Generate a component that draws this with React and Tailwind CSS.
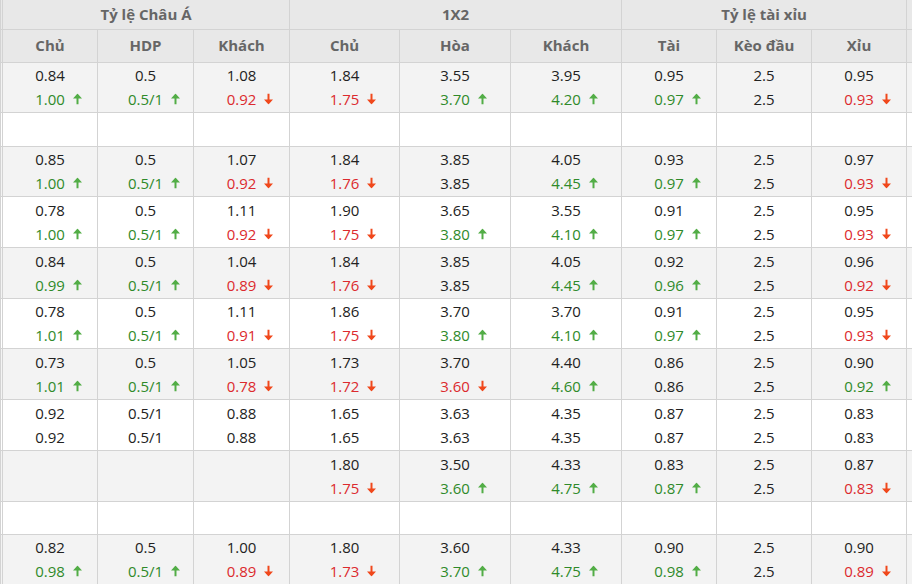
import React from "react";

const UP = "up";
const DOWN = "down";

// [top, bottom, direction] for each of the 9 columns; null = empty cell
const rows = [
  [
    ["0.84", "1.00", UP], ["0.5", "0.5/1", UP], ["1.08", "0.92", DOWN],
    ["1.84", "1.75", DOWN], ["3.55", "3.70", UP], ["3.95", "4.20", UP],
    ["0.95", "0.97", UP], ["2.5", "2.5"], ["0.95", "0.93", DOWN],
  ],
  "empty",
  [
    ["0.85", "1.00", UP], ["0.5", "0.5/1", UP], ["1.07", "0.92", DOWN],
    ["1.84", "1.76", DOWN], ["3.85", "3.85"], ["4.05", "4.45", UP],
    ["0.93", "0.97", UP], ["2.5", "2.5"], ["0.97", "0.93", DOWN],
  ],
  [
    ["0.78", "1.00", UP], ["0.5", "0.5/1", UP], ["1.11", "0.92", DOWN],
    ["1.90", "1.75", DOWN], ["3.65", "3.80", UP], ["3.55", "4.10", UP],
    ["0.91", "0.97", UP], ["2.5", "2.5"], ["0.95", "0.93", DOWN],
  ],
  [
    ["0.84", "0.99", UP], ["0.5", "0.5/1", UP], ["1.04", "0.89", DOWN],
    ["1.84", "1.76", DOWN], ["3.85", "3.85"], ["4.05", "4.45", UP],
    ["0.92", "0.96", UP], ["2.5", "2.5"], ["0.96", "0.92", DOWN],
  ],
  [
    ["0.78", "1.01", UP], ["0.5", "0.5/1", UP], ["1.11", "0.91", DOWN],
    ["1.86", "1.75", DOWN], ["3.70", "3.80", UP], ["3.70", "4.10", UP],
    ["0.91", "0.97", UP], ["2.5", "2.5"], ["0.95", "0.93", DOWN],
  ],
  [
    ["0.73", "1.01", UP], ["0.5", "0.5/1", UP], ["1.05", "0.78", DOWN],
    ["1.73", "1.72", DOWN], ["3.70", "3.60", DOWN], ["4.40", "4.60", UP],
    ["0.86", "0.86"], ["2.5", "2.5"], ["0.90", "0.92", UP],
  ],
  [
    ["0.92", "0.92"], ["0.5/1", "0.5/1"], ["0.88", "0.88"],
    ["1.65", "1.65"], ["3.63", "3.63"], ["4.35", "4.35"],
    ["0.87", "0.87"], ["2.5", "2.5"], ["0.83", "0.83"],
  ],
  [
    null, null, null,
    ["1.80", "1.75", DOWN], ["3.50", "3.60", UP], ["4.33", "4.75", UP],
    ["0.83", "0.87", UP], ["2.5", "2.5"], ["0.87", "0.83", DOWN],
  ],
  "empty",
  [
    ["0.82", "0.98", UP], ["0.5", "0.5/1", UP], ["1.00", "0.89", DOWN],
    ["1.80", "1.73", DOWN], ["3.60", "3.70", UP], ["4.33", "4.75", UP],
    ["0.90", "0.98", UP], ["2.5", "2.5"], ["0.90", "0.89", DOWN],
  ],
];

// row heights, matched to the screenshot
const heights = [
  "h-[50px]", "h-[34px]", "h-[50px]", "h-[51px]", "h-[51px]", "h-[50px]",
  "h-[51px]", "h-[51px]", "h-[51px]", "h-[33px]", "h-[50px]",
];

const Arrow = ({ dir }) => (
  <svg
    width="9"
    height="11"
    viewBox="0 0 9 11"
    className={`absolute left-full top-1/2 -translate-y-1/2 ml-[8px] ${
      dir === UP ? "text-[#52ad46]" : "text-[#f0481c]"
    }`}
    fill="currentColor"
  >
    {dir === UP ? (
      <path d="M4.5 0 L9 5 L5.5 5 L5.5 11 L3.5 11 L3.5 5 L0 5 Z" />
    ) : (
      <path d="M4.5 11 L9 6 L5.5 6 L5.5 0 L3.5 0 L3.5 6 L0 6 Z" />
    )}
  </svg>
);

const OddsCell = ({ data }) => {
  if (!data) return <td className="border border-[#d3d3d3]" />;
  const [top, bottom, dir] = data;
  const color =
    dir === UP ? "text-[#2f8a2a]" : dir === DOWN ? "text-[#dc2a2e]" : "text-[#222]";
  return (
    <td className="border border-[#d3d3d3] p-0 text-center align-middle">
      <div className="leading-[24px] text-[#222]">{top}</div>
      <div className="leading-[24px]">
        <span className={`relative inline-block ${color}`}>
          {bottom}
          {dir && <Arrow dir={dir} />}
        </span>
      </div>
    </td>
  );
};

const widths = [2, 95, 96, 96, 110, 111, 111, 95, 95, 95, 20];

const App = () => {
  return (
    <div className="w-[912px] h-[584px] overflow-hidden bg-white font-['Open_Sans',sans-serif] text-[15px]">
      <table className="table-fixed border-collapse w-[926px]">
        <colgroup>
          {widths.map((w, i) => (
            <col key={i} style={{ width: w }} />
          ))}
        </colgroup>
        <thead className="bg-[#e8e8e8] text-[#666] font-bold">
          <tr className="h-[29px]">
            <th className="border border-[#d3d3d3] border-t-0" />
            <th colSpan={3} className="border border-[#d3d3d3] border-t-0 font-bold">
              Tỷ lệ Châu Á
            </th>
            <th colSpan={3} className="border border-[#d3d3d3] border-t-0 font-bold">
              1X2
            </th>
            <th colSpan={3} className="border border-[#d3d3d3] border-t-0 font-bold">
              Tỷ lệ tài xỉu
            </th>
            <th className="border border-[#d3d3d3] border-t-0" />
          </tr>
          <tr className="h-[33px]">
            <th className="border border-[#d3d3d3]" />
            {["Chủ", "HDP", "Khách", "Chủ", "Hòa", "Khách", "Tài", "Kèo đầu", "Xỉu"].map(
              (h, i) => (
                <th key={i} className="border border-[#d3d3d3] font-bold">
                  {h}
                </th>
              )
            )}
            <th className="border border-[#d3d3d3]" />
          </tr>
        </thead>
        <tbody>
          {rows.map((row, r) => {
            const bg = r % 2 === 0 ? "bg-[#f3f3f3]" : "bg-white";
            if (row === "empty") {
              return (
                <tr key={r} className={`${heights[r]} ${bg}`}>
                  {widths.map((_, i) => (
                    <td key={i} className="border border-[#d3d3d3]" />
                  ))}
                </tr>
              );
            }
            return (
              <tr key={r} className={`${heights[r]} ${bg}`}>
                <td className="border border-[#d3d3d3]" />
                {row.map((c, i) => (
                  <OddsCell key={i} data={c} />
                ))}
                <td className="border border-[#d3d3d3]" />
              </tr>
            );
          })}
        </tbody>
      </table>
    </div>
  );
};

export default App;
